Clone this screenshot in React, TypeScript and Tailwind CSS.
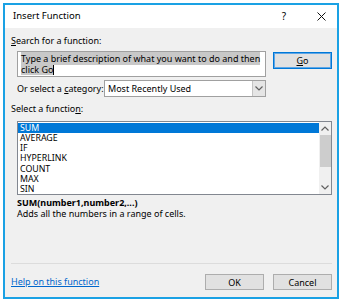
import React from 'react';

const font = { fontFamily: '"Noto Sans", "Open Sans", sans-serif' };

function Chevron({ up = false }: { up?: boolean }) {
  return (
    <svg width="8" height="5" viewBox="0 0 8 5">
      <path
        d={up ? 'M0.5 4.5 L4 1 L7.5 4.5' : 'M0.5 0.5 L4 4 L7.5 0.5'}
        fill="none"
        stroke="#606060"
        strokeWidth="1.2"
      />
    </svg>
  );
}

const functions = ['SUM', 'AVERAGE', 'IF', 'HYPERLINK', 'COUNT', 'MAX', 'SIN'];

export default function App() {
  return (
    <div className="w-[344px] h-[301px] bg-white pt-[3px] pl-[3px]" style={font}>
      <div className="w-[336px] h-[296px] border-2 border-[#1aa1e4] bg-[#f0f0f0] flex flex-col text-[9px] text-[#000]">
        {/* Title bar */}
        <div className="h-[23px] bg-white flex items-center pl-[8px] pr-[11px] shrink-0">
          <span className="text-[9.5px]">Insert Function</span>
          <span className="ml-auto text-[10px] mr-[31px]">?</span>
          <svg width="9" height="9" viewBox="0 0 9 9">
            <path d="M0.5 0.5 L8.5 8.5 M8.5 0.5 L0.5 8.5" stroke="#111" strokeWidth="1" />
          </svg>
        </div>

        {/* Body */}
        <div className="flex-1 flex flex-col pl-[6px] pr-[5px]">
          <div className="mt-[7px] h-[12px] leading-[12px]">
            <span className="underline">S</span>earch for a function:
          </div>

          <div className="mt-[4px] flex items-start">
            <div className="ml-[6px] w-[249px] h-[26px] bg-white border border-[#a0a0a0] pl-[3px] pt-[1px] leading-[11px]">
              <div>
                <span className="bg-[#c8c8c8]">Type a brief description of what you want to do and then</span>
              </div>
              <div className="flex items-center">
                <span className="bg-[#c8c8c8]">click Go</span>
                <span className="w-px h-[10px] bg-black" />
              </div>
            </div>
            <button className="ml-auto mt-[1px] w-[59px] h-[17px] bg-[#e1e1e1] border border-[#0078d7] shadow-[inset_0_0_0_1px_#5ea6e6] leading-[14px]">
              <span className="underline">G</span>o
            </button>
          </div>

          <div className="mt-[3px] flex items-center h-[17px]">
            <span className="ml-[6px]">
              Or select a <span className="underline">c</span>ategory:
            </span>
            <div className="ml-auto mr-[66px] w-[162px] h-[17px] bg-white border border-[#a0a0a0] flex items-center">
              <span className="pl-[3px]">Most Recently Used</span>
              <div className="ml-auto w-[13px] h-full bg-[#e5e5e5] border-l border-[#c4c4c4] flex items-center justify-center">
                <Chevron />
              </div>
            </div>
          </div>

          <div className="mt-[6px] h-[12px] leading-[12px]">
            Select a functio<span className="underline">n</span>:
          </div>

          <div className="mt-[6px] ml-[6px] w-[315px] h-[74px] bg-white border border-[#828790] flex">
            <div className="flex-1 flex flex-col pt-px">
              {functions.map((f, i) => (
                <div
                  key={f}
                  className={
                    'h-[10.3px] leading-[10.3px] pl-[2px] text-[8.8px] overflow-hidden ' +
                    (i === 0 ? 'bg-[#0078d7] text-white' : '')
                  }
                >
                  {f}
                </div>
              ))}
            </div>
            <div className="w-[12px] bg-[#f0f0f0] flex flex-col items-center">
              <div className="h-[13px] flex items-center justify-center">
                <Chevron up />
              </div>
              <div className="w-[11px] h-[32px] bg-[#cdcdcd]" />
              <div className="mt-auto h-[13px] flex items-center justify-center">
                <Chevron />
              </div>
            </div>
          </div>

          <div className="mt-[2px] ml-[6px] h-[11px] leading-[11px] font-bold">SUM(number1,number2,...)</div>
          <div className="ml-[6px] h-[11px] leading-[11px]">Adds all the numbers in a range of cells.</div>

          <div className="mt-auto h-px bg-[#dcdcdc]" />
          <div className="mt-[10px] mb-[7px] flex items-center h-[16px]">
            <span className="text-[#0066cc] underline">Help on this function</span>
            <button className="ml-auto w-[59px] h-[16px] bg-[#e1e1e1] border border-[#adadad] leading-[13px]">OK</button>
            <button className="ml-[9px] w-[59px] h-[16px] bg-[#e1e1e1] border border-[#adadad] leading-[13px]">Cancel</button>
          </div>
        </div>
      </div>
    </div>
  );
}
